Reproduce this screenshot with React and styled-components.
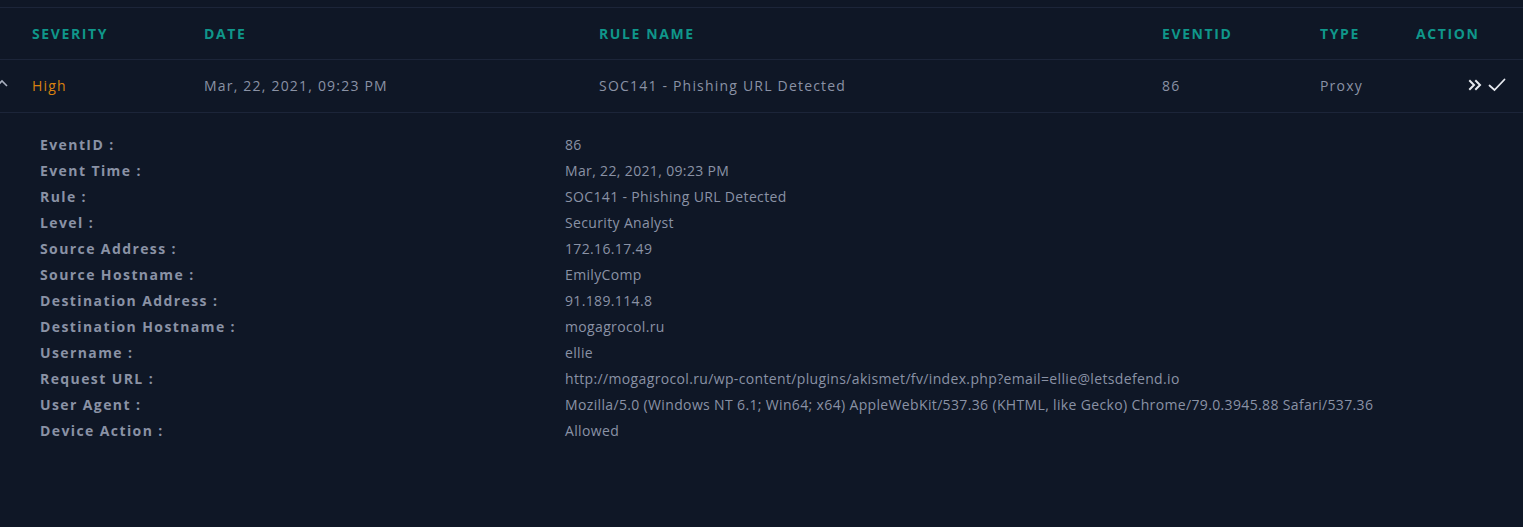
import React from "react";
import styled, { createGlobalStyle } from "styled-components";

const Global = createGlobalStyle`
  html, body { margin: 0; padding: 0; background: #0f1726; }
  body { font-family: "Open Sans", "Noto Sans", sans-serif; }
`;

const Page = styled.div`
  width: 1523px;
  height: 527px;
  background: #0f1726;
  overflow: hidden;
  padding-top: 7px;
  box-sizing: border-box;
`;

const Table = styled.div`
  border-top: 1px solid #1c2539;
`;

const cols = "172px 395px 563px 158px 96px 1fr";

const HeaderRow = styled.div`
  display: grid;
  grid-template-columns: ${cols};
  align-items: center;
  height: 51px;
  padding: 0 17px 0 32px;
  border-bottom: 1px solid #1c2539;
`;

const HeadCell = styled.div`
  color: #0f968a;
  font-size: 14px;
  font-weight: 700;
  letter-spacing: 1.6px;
  text-transform: uppercase;
`;

const DataRow = styled.div`
  position: relative;
  display: grid;
  grid-template-columns: ${cols};
  align-items: center;
  height: 50px;
  padding: 0 17px 2px 32px;
  border-bottom: 1px solid #1c2539;
`;

const Cell = styled.div`
  color: ${(p) => p.$color || "#8a92a5"};
  font-size: 14px;
  letter-spacing: 1.2px;
  white-space: nowrap;
`;

const Toggle = styled.span`
  position: absolute;
  left: -4px;
  top: 19px;
  display: flex;
`;

const Actions = styled.div`
  display: flex;
  justify-content: flex-end;
  align-items: center;
  gap: 6px;
  color: #e6e9ef;
`;

const Details = styled.div`
  display: grid;
  grid-template-columns: 525px 1fr;
  grid-auto-rows: 26px;
  align-items: center;
  padding: 18px 0 0 40px;
`;

const Label = styled.div`
  color: #8a92a5;
  font-size: 14px;
  font-weight: 700;
  letter-spacing: 1.4px;
`;

const Value = styled.div`
  color: #8a92a5;
  font-size: 14px;
  letter-spacing: 0.35px;
  white-space: nowrap;
`;

const details = [
  ["EventID :", "86"],
  ["Event Time :", "Mar, 22, 2021, 09:23 PM"],
  ["Rule :", "SOC141 - Phishing URL Detected"],
  ["Level :", "Security Analyst"],
  ["Source Address :", "172.16.17.49"],
  ["Source Hostname :", "EmilyComp"],
  ["Destination Address :", "91.189.114.8"],
  ["Destination Hostname :", "mogagrocol.ru"],
  ["Username :", "ellie"],
  ["Request URL :", "http://mogagrocol.ru/wp-content/plugins/akismet/fv/index.php?email=ellie@letsdefend.io"],
  ["User Agent :", "Mozilla/5.0 (Windows NT 6.1; Win64; x64) AppleWebKit/537.36 (KHTML, like Gecko) Chrome/79.0.3945.88 Safari/537.36"],
  ["Device Action :", "Allowed"],
];

export default function App() {
  return (
    <Page>
      <Global />
      <Table>
        <HeaderRow>
          <HeadCell>Severity</HeadCell>
          <HeadCell>Date</HeadCell>
          <HeadCell>Rule Name</HeadCell>
          <HeadCell>EventID</HeadCell>
          <HeadCell>Type</HeadCell>
          <HeadCell>Action</HeadCell>
        </HeaderRow>
        <DataRow>
          <Toggle>
            <svg width="12" height="8" viewBox="0 0 12 8" fill="none" stroke="#aab1c0" strokeWidth="1.6">
              <path d="M1 7 L6 2 L11 7" />
            </svg>
          </Toggle>
          <Cell $color="#d9820f">High</Cell>
          <Cell>Mar, 22, 2021, 09:23 PM</Cell>
          <Cell>SOC141 - Phishing URL Detected</Cell>
          <Cell>86</Cell>
          <Cell>Proxy</Cell>
          <Actions>
            <svg width="14" height="12" viewBox="0 0 14 12" fill="none" stroke="currentColor" strokeWidth="2" strokeLinecap="square">
              <path d="M2 2 L6 6 L2 10" />
              <path d="M8 2 L12 6 L8 10" />
            </svg>
            <svg width="18" height="14" viewBox="0 0 18 14" fill="none" stroke="currentColor" strokeWidth="1.8" strokeLinecap="round">
              <path d="M1.5 7.5 L6.5 12 L16.5 1.5" />
            </svg>
          </Actions>
        </DataRow>
      </Table>
      <Details>
        {details.map(([k, v]) => (
          <React.Fragment key={k}>
            <Label>{k}</Label>
            <Value>{v}</Value>
          </React.Fragment>
        ))}
      </Details>
    </Page>
  );
}
